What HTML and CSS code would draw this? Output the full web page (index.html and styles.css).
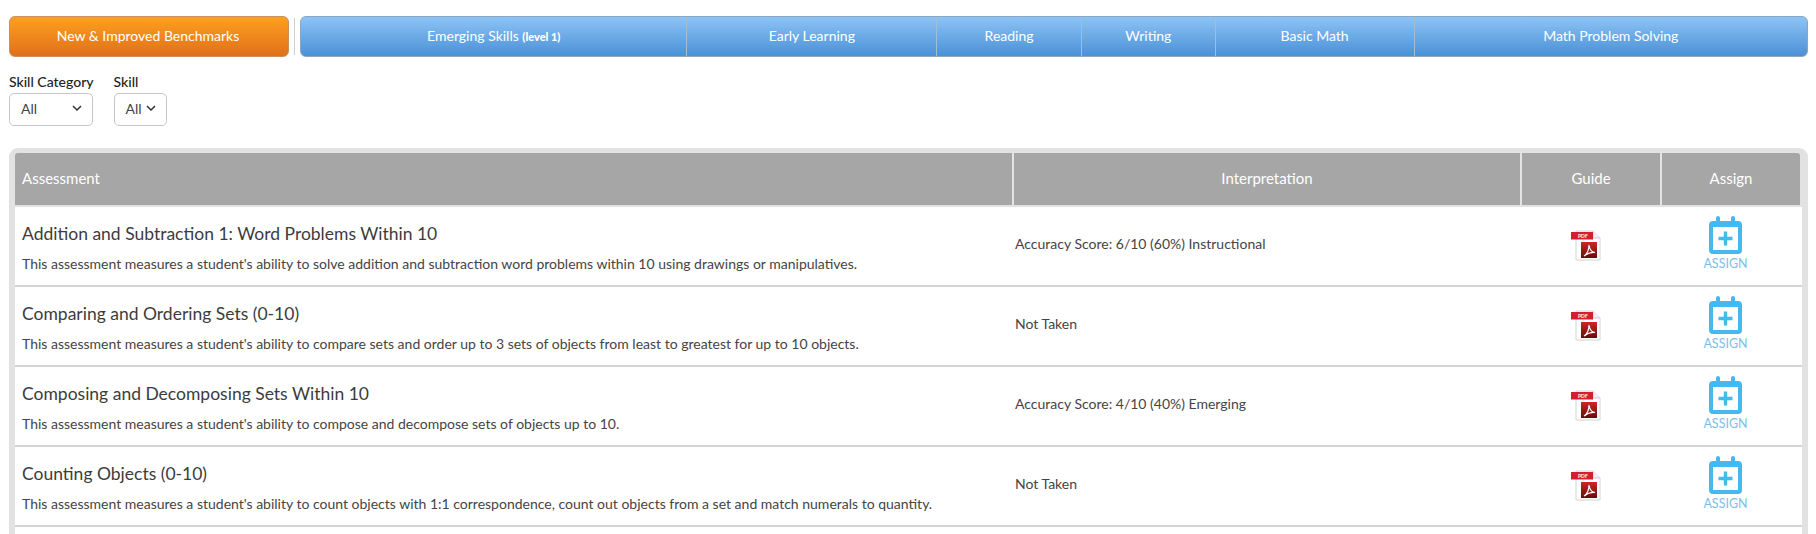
FILE: index.html
```html
<!DOCTYPE html>
<html lang="en">
<head>
<meta charset="utf-8">
<title>Benchmarks</title>
<link rel="stylesheet" href="styles.css">
</head>
<body>
<svg class="defs" width="0" height="0" aria-hidden="true">
  <defs>
    <linearGradient id="pdfred" x1="0" y1="0" x2="0" y2="1">
      <stop offset="0" stop-color="#d2241f"/>
      <stop offset="1" stop-color="#650c0c"/>
    </linearGradient>
  </defs>
  <symbol id="pdf" viewBox="0 0 30 31">
    <path d="M5 1h17l7 7v22H5z" fill="#fff" stroke="#d4d4d4"/>
    <path d="M22 1v7h7" fill="#f1f1f1" stroke="#cfcfcf"/>
    <rect x="0" y="2" width="22" height="7.500" fill="#d4202c"/>
    <rect x="10" y="12" width="16" height="16" fill="url(#pdfred)"/>
    <path d="M13 26c3-2 5-6 5-11 .5 4 3 7 6 7.500-4-.5-7 .5-11 3.500z" fill="none" stroke="#fff" stroke-width="1.200"/>
  </symbol>
  <symbol id="cal" viewBox="0 0 33 38">
    <path d="M9 0a2 2 0 0 1 2 2v3h11V2a2 2 0 0 1 4 0v3h3a4 4 0 0 1 4 4v25a4 4 0 0 1-4 4H4a4 4 0 0 1-4-4V9a4 4 0 0 1 4-4h3V2a2 2 0 0 1 2-2z" fill="#45b9ee"/>
    <rect x="4" y="11" width="25" height="23" fill="#fff"/>
    <path d="M16.500 15.500v14M9.500 22.500h14" stroke="#45b9ee" stroke-width="3.400" fill="none"/>
  </symbol>
  <symbol id="chev" viewBox="0 0 10 6">
    <path d="M1 1l4 4 4-4" fill="none" stroke="#333" stroke-width="1.500"/>
  </symbol>
</svg>

<nav class="topnav">
  <a class="btn-orange">New &amp; Improved Benchmarks</a>
  <span class="nav-sep"></span>
  <div class="tabs">
    <a class="tab">Emerging Skills&nbsp;<b class="level">(level 1)</b></a>
    <a class="tab">Early Learning</a>
    <a class="tab">Reading</a>
    <a class="tab">Writing</a>
    <a class="tab">Basic Math</a>
    <a class="tab">Math Problem Solving</a>
  </div>
</nav>

<div class="filters">
  <div class="filter">
    <label class="filter-label">Skill Category</label>
    <div class="select select-wide"><span>All</span><svg class="chev"><use href="#chev"/></svg></div>
  </div>
  <div class="filter">
    <label class="filter-label">Skill</label>
    <div class="select select-narrow"><span>All</span><svg class="chev"><use href="#chev"/></svg></div>
  </div>
</div>

<section class="panel">
  <div class="row head">
    <div class="cell c-name">Assessment</div>
    <div class="cell c-int center">Interpretation</div>
    <div class="cell c-guide center">Guide</div>
    <div class="cell c-assign center">Assign</div>
  </div>

  <div class="row item">
    <div class="c-name">
      <h3 class="title">Addition and Subtraction 1: Word Problems Within 10</h3>
      <p class="desc">This assessment measures a student's ability to solve addition and subtraction word problems within 10 using drawings or manipulatives.</p>
    </div>
    <div class="c-int interp">Accuracy Score: 6/10 (60%) Instructional</div>
    <div class="c-guide icon-cell"><svg class="pdf" viewBox="0 0 30 31"><use href="#pdf"/><text x="7" y="7.800" class="pdf-label">PDF</text></svg></div>
    <div class="c-assign assign"><svg class="cal"><use href="#cal"/></svg><span>ASSIGN</span></div>
  </div>

  <div class="row item">
    <div class="c-name">
      <h3 class="title">Comparing and Ordering Sets (0-10)</h3>
      <p class="desc">This assessment measures a student's ability to compare sets and order up to 3 sets of objects from least to greatest for up to 10 objects.</p>
    </div>
    <div class="c-int interp">Not Taken</div>
    <div class="c-guide icon-cell"><svg class="pdf" viewBox="0 0 30 31"><use href="#pdf"/><text x="7" y="7.800" class="pdf-label">PDF</text></svg></div>
    <div class="c-assign assign"><svg class="cal"><use href="#cal"/></svg><span>ASSIGN</span></div>
  </div>

  <div class="row item">
    <div class="c-name">
      <h3 class="title">Composing and Decomposing Sets Within 10</h3>
      <p class="desc">This assessment measures a student's ability to compose and decompose sets of objects up to 10.</p>
    </div>
    <div class="c-int interp">Accuracy Score: 4/10 (40%) Emerging</div>
    <div class="c-guide icon-cell"><svg class="pdf" viewBox="0 0 30 31"><use href="#pdf"/><text x="7" y="7.800" class="pdf-label">PDF</text></svg></div>
    <div class="c-assign assign"><svg class="cal"><use href="#cal"/></svg><span>ASSIGN</span></div>
  </div>

  <div class="row item">
    <div class="c-name">
      <h3 class="title">Counting Objects (0-10)</h3>
      <p class="desc">This assessment measures a student's ability to count objects with 1:1 correspondence, count out objects from a set and match numerals to quantity.</p>
    </div>
    <div class="c-int interp">Not Taken</div>
    <div class="c-guide icon-cell"><svg class="pdf" viewBox="0 0 30 31"><use href="#pdf"/><text x="7" y="7.800" class="pdf-label">PDF</text></svg></div>
    <div class="c-assign assign"><svg class="cal"><use href="#cal"/></svg><span>ASSIGN</span></div>
  </div>

  <div class="filler"></div>
</section>
</body>
</html>
```

FILE: styles.css
```css
* { box-sizing: border-box; }
html, body { height: 100%; overflow: hidden; }
body {
  margin: 0;
  padding: 16px 8px 0 9px;
  display: flex;
  flex-direction: column;
  background: #fff;
  color: #333;
  font-family: Lato, "Open Sans", sans-serif;
  font-size: 13px;
  font-variant-ligatures: common-ligatures;
}
.defs { position: absolute; }
.pdf-label { font: 700 5px Lato, sans-serif; fill: #fff; }

.topnav { display: flex; align-items: stretch; flex: none; height: 41px; }
.btn-orange {
  width: 280px;
  display: flex; align-items: center; justify-content: center;
  padding: 0 2px 2px 0;
  color: #fff;
  font-size: 14px;
  border: 1px solid #c9925a;
  border-radius: 6px;
  background: linear-gradient(#fda01f, #e0701b);
}
.nav-sep { width: 1px; margin: 2px 5px 2px 5px; background: #cfcfcf; }
.tabs {
  flex: 1;
  display: grid;
  grid-template-columns: 386fr 250fr 145fr 134fr 199fr 394fr;
  border: 1px solid #8ea6bd;
  border-radius: 6px;
  background: linear-gradient(#8cc4f6, #4b90d6);
  overflow: hidden;
}
.tab {
  display: flex; align-items: center; justify-content: center;
  padding-bottom: 2px;
  color: #fff;
  font-size: 14px;
  border-left: 1px solid #a3bdd6;
}
.tab:first-child { border-left: 0; }
.level { font-size: 11px; font-weight: 900; padding-top: 1px; }

.filters { display: flex; flex: none; gap: 20px; margin-top: 15px; }
.filter { display: flex; flex-direction: column; }
.filter-label { font-size: 14px; font-weight: 500; line-height: 20px; height: 21px; color: #222; }
.select {
  height: 33px;
  display: flex; align-items: center; justify-content: space-between;
  border: 1px solid #c6c6c6;
  border-radius: 5px;
  padding: 0 11px 3px;
  font-size: 14px;
  color: #444;
}
.select-wide { width: 84px; padding-right: 10px; }
.select-narrow { width: 53px; padding-right: 10px; }
.chev { width: 10px; height: 6px; }

.panel {
  flex: 1;
  min-height: 0;
  display: flex;
  flex-direction: column;
  margin-top: 22px;
  padding: 5px 6px 0 6px;
  background: #e2e2e2;
  border-radius: 9px 9px 0 0;
  width: 1799px;
}
.row { display: grid; flex: none; grid-template-columns: 997px 508px 140px 1fr; }
.head {
  height: 52px;
  margin-bottom: 2px;
  margin-right: 2px;
  background: #a6a6a6;
  color: #fff;
  font-size: 15px;
  border-radius: 3px 3px 0 0;
}
.cell { display: flex; align-items: center; padding: 0 0 3px 7px; border-left: 2px solid #e4e4e4; }
.cell.c-name { border-left: 0; }
.cell.center { justify-content: center; padding-left: 0; }
.item {
  height: 80px;
  background: #fff;
  border-bottom: 2px solid #d4d4d4;
  align-items: stretch;
}
.filler { flex: 1; min-height: 0; background: #fff; }
.c-name { min-width: 0; }
.item .c-name { padding: 16px 0 0 7px; }
.title { margin: 0; font-size: 17.500px; font-weight: 400; line-height: 22px; color: #3c3c3c; }
.desc { margin: 10px 0 0; font-size: 14px; line-height: 18px; color: #444; white-space: nowrap; }
.interp { display: flex; align-items: center; padding: 0 0 6px 3px; font-size: 14px; color: #444; }
.icon-cell { display: flex; align-items: center; justify-content: center; }
.pdf { width: 30px; height: 31px; margin: 0 0 2px -9px; }
.assign {
  display: flex; flex-direction: column; align-items: center;
  padding: 9px 11px 0 0;
  color: #7cc0ea;
  font-size: 12.500px;
  line-height: 15px;
}
.cal { width: 33px; height: 38px; margin-bottom: 2px; }
```
